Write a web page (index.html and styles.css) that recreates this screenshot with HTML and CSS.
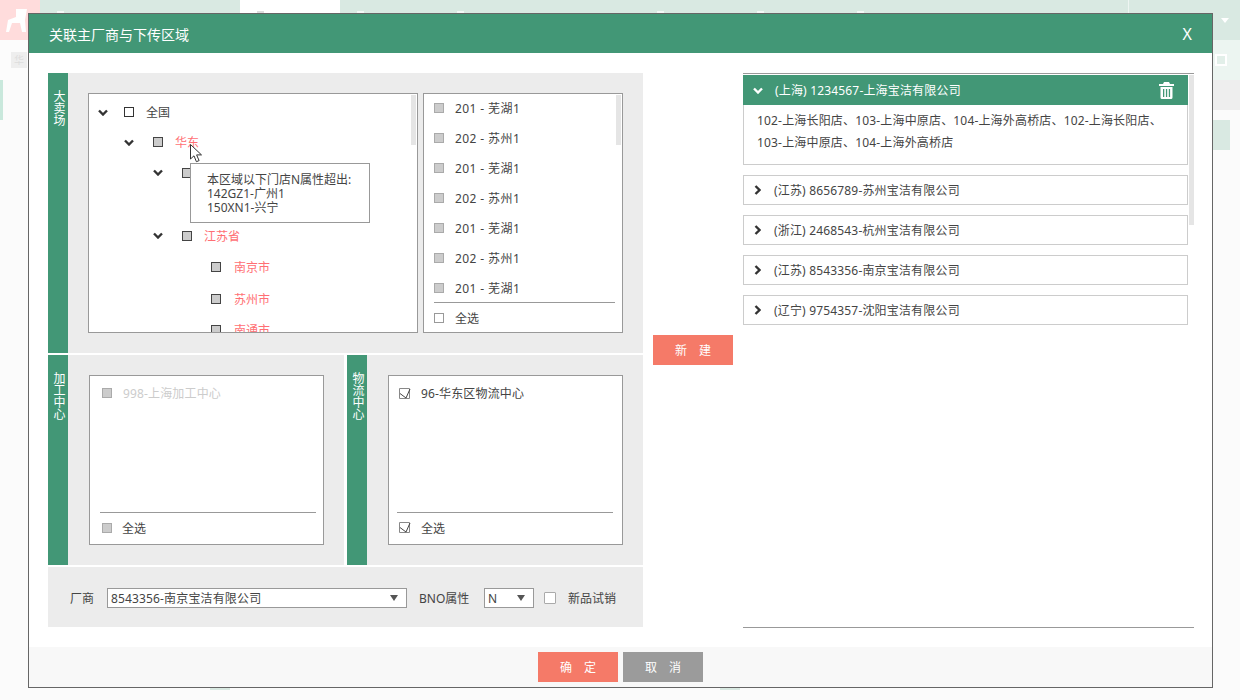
FILE: index.html
```html
<!DOCTYPE html>
<html lang="zh-CN">
<head>
    <meta charset="UTF-8">
    <title>关联主厂商与下传区域</title>
    <link rel="stylesheet" href="styles.css">
</head>
<body>
    <!-- faded page behind the dialog -->
    <div class="page">
        <div class="topbar">
            <div class="logo-cell">
                <svg class="logo" width="40" height="40" viewBox="0 0 40 40"><path d="M16 9h11l-2 11 1 12h-4l-2-9h-8l-3 9H6l2-12 8-3z" fill="#fff"/></svg>
            </div>
            <div class="nav-cell"><span class="nav-icon"></span></div>
            <div class="nav-cell"></div>
            <div class="nav-cell nav-cell-on"><span class="nav-icon nav-icon-grey"></span></div>
            <div class="nav-cell"><span class="nav-icon"></span></div>
            <div class="nav-cell"><span class="nav-icon"></span></div>
            <div class="nav-cell"></div>
            <div class="nav-cell"><span class="nav-icon"></span></div>
            <div class="nav-cell"><span class="nav-icon"></span></div>
            <div class="nav-cell"><span class="nav-icon"></span></div>
            <div class="user-cell"><span class="user-caret"></span></div>
        </div>
        <div class="subbar">
            <span class="sub-chip">华</span>
            <span class="sub-square"></span>
        </div>
        <div class="page-row">
            <span class="page-mark"></span>
            <span class="page-grey"></span>
        </div>
        <div class="page-green"></div>
        <div class="page-foot">
            <span class="foot-mark"></span>
            <span class="foot-mark"></span>
        </div>
    </div>

    <div class="dialog">
        <div class="dialog-head">
            <span>关联主厂商与下传区域</span>
            <span class="dialog-close">X</span>
        </div>
        <div class="dialog-body">
            <div class="left-panel">
                <div class="section section-top">
                    <div class="side-bar">大卖场</div>
                    <div class="section-main">
                        <div class="box tree-box">
                            <div class="tree-row tree-row-top level-0">
                                <svg class="chev" viewBox="0 0 10 7"><path d="M1 1.5l4 4 4-4" /></svg>
                                <span class="cb cb-empty-dark"></span><span class="tree-text">全国</span>
                            </div>
                            <div class="tree-row tree-row-top level-1">
                                <svg class="chev" viewBox="0 0 10 7"><path d="M1 1.5l4 4 4-4" /></svg>
                                <span class="cb cb-part"></span><span class="tree-text red">华东</span>
                            </div>
                            <div class="tree-row level-2">
                                <svg class="chev" viewBox="0 0 10 7"><path d="M1 1.5l4 4 4-4" /></svg>
                                <span class="cb cb-part"></span>
                            </div>
                            <div class="tree-row level-3"></div>
                            <div class="tree-row level-2">
                                <svg class="chev" viewBox="0 0 10 7"><path d="M1 1.5l4 4 4-4" /></svg>
                                <span class="cb cb-part"></span><span class="tree-text red">江苏省</span>
                            </div>
                            <div class="tree-row level-3">
                                <span class="cb cb-part"></span><span class="tree-text red">南京市</span>
                            </div>
                            <div class="tree-row level-3">
                                <span class="cb cb-part"></span><span class="tree-text red">苏州市</span>
                            </div>
                            <div class="tree-row level-3">
                                <span class="cb cb-part"></span><span class="tree-text red">南通市</span>
                            </div>
                            <div class="scroll-thumb"></div>
                        </div>
                        <div class="box list-box">
                            <div class="list-rows">
                                <div class="list-row"><span class="cb cb-grey"></span><span>201 - 芜湖1</span></div>
                                <div class="list-row"><span class="cb cb-grey"></span><span>202 - 苏州1</span></div>
                                <div class="list-row"><span class="cb cb-grey"></span><span>201 - 芜湖1</span></div>
                                <div class="list-row"><span class="cb cb-grey"></span><span>202 - 苏州1</span></div>
                                <div class="list-row"><span class="cb cb-grey"></span><span>201 - 芜湖1</span></div>
                                <div class="list-row"><span class="cb cb-grey"></span><span>202 - 苏州1</span></div>
                                <div class="list-row"><span class="cb cb-grey"></span><span>201 - 芜湖1</span></div>
                            </div>
                            <div class="list-foot"><span class="cb cb-empty"></span><span>全选</span></div>
                            <div class="scroll-thumb"></div>
                        </div>
                        <!-- hover tooltip on 华东 -->
                        <div class="tip">本区域以下门店N属性超出:<br>142GZ1-广州1<br>150XN1-兴宁</div>
                        <svg class="cursor" width="13" height="19" viewBox="0 0 13 19"><path d="M.5.5v14.5l3.5-3.2 2.4 5.9 2.7-1.1-2.5-5.700h4.900z" fill="#fff" stroke="#333"/></svg>
                    </div>
                </div>
                <div class="section-pair">
                    <div class="section section-half">
                        <div class="side-bar">加工中心</div>
                        <div class="half-main">
                            <div class="box half-box half-box-left">
                                <div class="half-item half-item-left disabled"><span class="cb cb-grey"></span><span>998-上海加工中心</span></div>
                                <div class="half-foot"><span class="cb cb-grey"></span><span>全选</span></div>
                            </div>
                        </div>
                    </div>
                    <div class="section section-half">
                        <div class="side-bar">物流中心</div>
                        <div class="half-main">
                            <div class="box half-box half-box-right">
                                <div class="half-item">
                                    <svg class="cb-check" viewBox="0 0 12 11"><path class="cb-check-box" d="M.5.5h10v10H.5z"/><path class="cb-check-tick" d="M1 5.500l6 4.500L11 1"/></svg>
                                    <span>96-华东区物流中心</span>
                                </div>
                                <div class="half-foot">
                                    <svg class="cb-check" viewBox="0 0 12 11"><path class="cb-check-box" d="M.5.5h10v10H.5z"/><path class="cb-check-tick" d="M1 5.500l6 4.500L11 1"/></svg>
                                    <span>全选</span>
                                </div>
                            </div>
                        </div>
                    </div>
                </div>
                <div class="filter-row">
                    <span class="filter-label">厂商</span>
                    <div class="fake-select select-wide"><span>8543356-南京宝洁有限公司</span><i class="caret"></i></div>
                    <span class="filter-label-b">BNO属性</span>
                    <div class="fake-select select-small"><span>N</span><i class="caret"></i></div>
                    <span class="cb-big"></span>
                    <span>新品试销</span>
                </div>
            </div>

            <div class="center-col">
                <button class="btn btn-red">新 建</button>
            </div>

            <div class="right-col">
                <div class="acc-open">
                    <div class="acc-head">
                        <svg class="chev chev-white" viewBox="0 0 10 7"><path d="M1 1.5l4 4 4-4" /></svg>
                        <span>(上海) 1234567-上海宝洁有限公司</span>
                        <svg class="trash" width="15" height="17" viewBox="0 0 15 17"><path d="M5 0h5l1 2h4v2H0V2h4zM1.5 5h12v10.5a1.5 1.5 0 0 1-1.5 1.5H3a1.5 1.5 0 0 1-1.5-1.5zM4 7v8h1.300V7zM6.900 7v8h1.300V7zM9.800 7v8h1.300V7z" fill="#fff" fill-rule="evenodd"/></svg>
                    </div>
                    <div class="acc-body">102-上海长阳店、103-上海中原店、104-上海外高桥店、102-上海长阳店、<br>103-上海中原店、104-上海外高桥店</div>
                </div>
                <div class="acc-item"><svg class="chev-r" viewBox="0 0 7 10"><path d="M1.500 1l4 4-4 4" /></svg><span>(江苏) 8656789-苏州宝洁有限公司</span></div>
                <div class="acc-item"><svg class="chev-r" viewBox="0 0 7 10"><path d="M1.500 1l4 4-4 4" /></svg><span>(浙江) 2468543-杭州宝洁有限公司</span></div>
                <div class="acc-item"><svg class="chev-r" viewBox="0 0 7 10"><path d="M1.500 1l4 4-4 4" /></svg><span>(江苏) 8543356-南京宝洁有限公司</span></div>
                <div class="acc-item"><svg class="chev-r" viewBox="0 0 7 10"><path d="M1.500 1l4 4-4 4" /></svg><span>(辽宁) 9754357-沈阳宝洁有限公司</span></div>
                <div class="right-scroll"></div>
            </div>
        </div>
        <div class="dialog-foot">
            <button class="btn btn-red">确 定</button>
            <button class="btn btn-grey">取 消</button>
        </div>
    </div>
</body>
</html>
```

FILE: styles.css
```css
* {
    box-sizing: border-box;
}
html, body {
    height: 100%;
}
body {
    margin: 0;
    overflow: hidden;
    background-color: #fbfbfb;
    color: #444;
    font-family: "Noto Sans", "Noto Sans CJK SC", sans-serif;
    font-size: 12px;
}

/* faded page */
.page {
    display: flex;
    flex-direction: column;
    height: 100%;
}
.topbar {
    display: flex;
    flex: none;
    height: 40px;
    background-color: #d9e9e2;
}
.logo-cell {
    width: 40px;
    background-color: #ffdcdc;
}
.logo {
    display: block;
}
.nav-cell {
    width: 100px;
    padding: 11px 0 0 17px;
}
.nav-cell-on {
    background-color: #fff;
}
.nav-icon {
    display: block;
    width: 7px;
    height: 10px;
    background-color: #f4f8f6;
}
.nav-icon-grey {
    background-color: #ddd;
}
.user-cell {
    flex: 1;
    margin-left: 188px;
    border-left: 1px solid #eef5f2;
    padding: 18px 0 0 92px;
}
.user-caret {
    display: block;
    width: 0;
    border: 4px solid transparent;
    border-top: 5px solid #fff;
}
.subbar {
    display: flex;
    flex: none;
    justify-content: space-between;
    align-items: center;
    height: 40px;
    padding: 0 13px 0 11px;
    background: linear-gradient(to right, #fcfcfc 1212px, #ecf5f1 1212px);
}
.sub-chip {
    width: 16px;
    height: 16px;
    background-color: #eee;
    color: #ddd;
    font-size: 10px;
    line-height: 16px;
    text-align: center;
}
.sub-square {
    width: 12px;
    height: 12px;
    border: 2px solid #fff;
    background-color: #e2efe9;
}
.page-row {
    display: flex;
    flex: none;
    justify-content: space-between;
    height: 40px;
}
.page-mark {
    width: 3px;
    background-color: #c9e8dc;
}
.page-grey {
    width: 28px;
    height: 30px;
    background-color: #eee;
}
.page-green {
    flex: none;
    width: 100px;
    height: 30px;
    margin-left: 1130px;
    background-color: #d9e9e2;
}
.page-foot {
    display: flex;
    gap: 490px;
    margin-top: auto;
    margin-bottom: 10px;
    padding-left: 210px;
}
.foot-mark {
    width: 20px;
    height: 2px;
    background-color: #d9e9e2;
}

/* dialog */
.dialog {
    position: absolute;
    top: 13px;
    left: 28px;
    display: flex;
    flex-direction: column;
    width: 1185px;
    height: 675px;
    border: 1px solid #666;
    background-color: #fff;
}
.dialog-head {
    display: flex;
    flex: none;
    justify-content: space-between;
    align-items: center;
    height: 39px;
    padding: 0 20px 0 20px;
    background-color: #429776;
    color: #fff;
    font-size: 14px;
}
.dialog-close {
    font-size: 16px;
}
.dialog-body {
    display: flex;
    flex: 1;
    padding: 20px 0 20px 19px;
}
.dialog-foot {
    display: flex;
    flex: none;
    justify-content: center;
    gap: 5px;
    height: 40px;
    padding-top: 5px;
    background-color: #f8f8f8;
}
.btn {
    width: 80px;
    height: 30px;
    padding: 0;
    border: 0;
    color: #fff;
    font-family: inherit;
    font-size: 12px;
    word-spacing: 9px;
}
.btn-red {
    background-color: #f57a68;
}
.btn-grey {
    background-color: #9b9b9b;
}

/* left panel */
.left-panel {
    display: flex;
    flex-direction: column;
    gap: 2px;
    width: 595px;
}
.section {
    display: flex;
    background-color: #ececec;
}
.section-top {
    height: 280px;
}
.section-pair {
    display: flex;
    justify-content: space-between;
    height: 210px;
}
.section-half {
    width: 296px;
}
.side-bar {
    flex: none;
    width: 20px;
    padding-top: 17px;
    background-color: #429776;
    color: #fff;
    line-height: 20px;
    writing-mode: vertical-rl;
}
.section-main {
    position: relative;
    display: flex;
    gap: 5px;
    padding: 20px;
}
.box {
    position: relative;
    border: 1px solid #999;
    background-color: #fff;
}
.tree-box {
    width: 330px;
    height: 240px;
    padding-top: 3px;
    overflow: hidden;
}
.tree-row {
    display: flex;
    align-items: center;
    height: 31.5px;
}
.tree-row-top {
    height: 30px;
}
.level-0 {
    padding-left: 9px;
}
.level-0 .chev {
    margin-right: 16px;
}
.level-1 {
    padding-left: 35px;
}
.level-2 {
    padding-left: 64px;
}
.level-3 {
    padding-left: 122px;
}
.level-3 .tree-text {
    margin-left: 13px;
}
.chev {
    flex: none;
    width: 10px;
    height: 7px;
    margin-right: 19px;
}
.chev path, .chev-r path {
    fill: none;
    stroke: #333;
    stroke-width: 2.4;
}
.chev-white path {
    stroke: #fff;
}
.cb {
    flex: none;
    width: 10px;
    height: 10px;
    border: 1px solid #999;
    background-color: #fff;
}
.cb-empty-dark {
    border-color: #333;
}
.cb-part {
    border-color: #444;
    background-color: #ccc;
}
.cb-grey {
    border-color: #aaa;
    background-color: #ccc;
}
.cb-check {
    flex: none;
    width: 12px;
    height: 11px;
}
.cb-check-box {
    fill: none;
    stroke: #888;
}
.cb-check-tick {
    fill: none;
    stroke: #444;
}
.tree-text {
    margin-left: 12px;
}
.red {
    color: #ff6f74;
}
.scroll-thumb {
    position: absolute;
    top: 1px;
    right: 1px;
    width: 5px;
    height: 50px;
    background-color: #e5e5e5;
}
.list-box {
    display: flex;
    flex-direction: column;
    width: 200px;
    height: 240px;
}
.list-rows {
    flex: 1;
    margin-top: -1px;
    overflow: hidden;
}
.list-row {
    display: flex;
    gap: 11px;
    align-items: center;
    height: 30px;
    padding-left: 10px;
    letter-spacing: .4px;
}
.list-foot {
    display: flex;
    gap: 11px;
    align-items: center;
    flex: none;
    height: 30px;
    margin: 0 7px 0 10px;
    border-top: 1px solid #999;
}
.tip {
    position: absolute;
    top: 90px;
    left: 122px;
    width: 180px;
    height: 60px;
    padding: 9px 16px;
    border: 1px solid #999;
    background-color: #fff;
    line-height: 14px;
}
.cursor {
    position: absolute;
    top: 71px;
    left: 122px;
}
.half-main {
    padding: 20px 0 0 21px;
}
.half-box {
    display: flex;
    flex-direction: column;
    width: 235px;
    height: 170px;
}
.half-item {
    display: flex;
    gap: 10px;
    align-items: center;
    margin: 7px 0 0 10px;
    height: 20px;
    letter-spacing: .15px;
}
.half-item-left {
    margin-left: 12px;
    gap: 11px;
}
.disabled {
    color: #ccc;
}
.half-foot {
    display: flex;
    gap: 10px;
    align-items: center;
    flex: none;
    height: 32px;
    margin: auto 9px 0 8px;
    padding: 0 0 2px 2px;
    border-top: 1px solid #999;
}
.half-box-left .half-foot {
    gap: 10px;
    margin: auto 7px 0 10px;
}

/* filter row */
.filter-row {
    display: flex;
    align-items: center;
    height: 60px;
    padding: 2px 0 0 22px;
    background-color: #ececec;
}
.filter-label {
    width: 37px;
}
.filter-label-b {
    width: 65px;
    margin-left: 12px;
}
.fake-select {
    display: flex;
    justify-content: space-between;
    align-items: center;
    height: 20px;
    padding: 0 8px 0 3px;
    border: 1px solid #999;
    background-color: #fff;
    letter-spacing: .15px;
}
.select-wide {
    width: 300px;
}
.select-small {
    width: 50px;
}
.caret {
    width: 0;
    margin-top: 4px;
    border: 4px solid transparent;
    border-top: 6px solid #555;
}
.cb-big {
    width: 12px;
    height: 12px;
    margin: 0 12px 0 10px;
    border: 1px solid #aaa;
    border-radius: 1px;
    background-color: #fff;
}

/* centre and right columns */
.center-col {
    display: flex;
    flex: none;
    align-items: center;
    margin: 0 10px;
}
.right-col {
    position: relative;
    width: 451px;
    margin-bottom: -1px;
    padding-top: 1px;
    border-top: 1px solid #999;
    border-bottom: 1px solid #999;
}
.acc-open {
    width: 445px;
}
.acc-head {
    display: flex;
    align-items: center;
    height: 30px;
    padding: 0 14px 0 10px;
    background-color: #429776;
    color: #fff;
    letter-spacing: .17px;
}
.acc-head .chev {
    margin-right: 12px;
}
.trash {
    margin-left: auto;
}
.acc-body {
    height: 60px;
    padding: 5px 13px;
    border: 1px solid #ccc;
    border-top: 0;
    line-height: 22px;
    letter-spacing: .17px;
}
.acc-item {
    display: flex;
    gap: 13px;
    align-items: center;
    width: 445px;
    height: 30px;
    margin-top: 10px;
    padding-left: 10px;
    border: 1px solid #ccc;
    letter-spacing: .17px;
}
.chev-r {
    flex: none;
    width: 7px;
    height: 10px;
}
.right-scroll {
    position: absolute;
    top: 1px;
    right: 0;
    width: 5px;
    height: 150px;
    background-color: #e5e5e5;
}
```
